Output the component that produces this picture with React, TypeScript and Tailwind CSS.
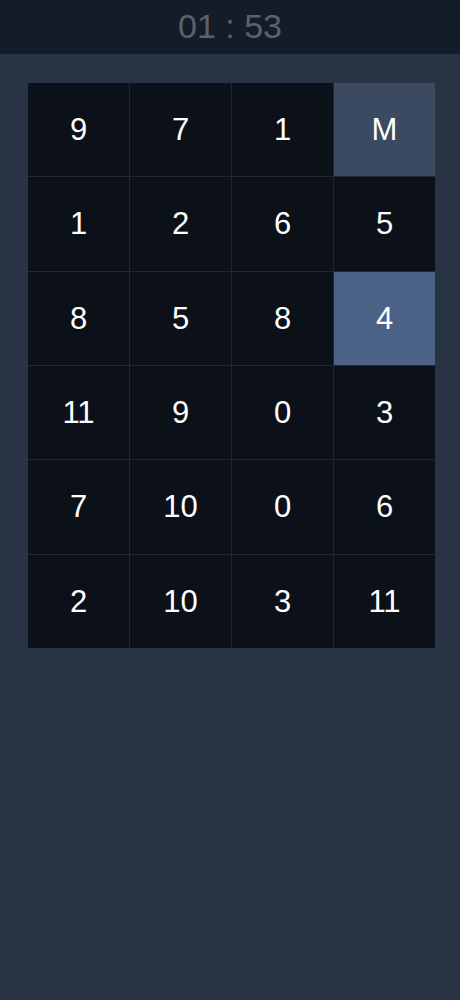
import React from "react";

const cells: { v: string; bg?: string }[] = [
  { v: "9" }, { v: "7" }, { v: "1" }, { v: "M", bg: "bg-[#3b4a60]" },
  { v: "1" }, { v: "2" }, { v: "6" }, { v: "5" },
  { v: "8" }, { v: "5" }, { v: "8" }, { v: "4", bg: "bg-[#4b6286]" },
  { v: "11" }, { v: "9" }, { v: "0" }, { v: "3" },
  { v: "7" }, { v: "10" }, { v: "0" }, { v: "6" },
  { v: "2" }, { v: "10" }, { v: "3" }, { v: "11" },
];

export default function App() {
  return (
    <div
      className="w-[460px] h-[1000px] bg-[#283343] flex flex-col"
      style={{ fontFamily: '"Liberation Sans", Arial, sans-serif' }}
    >
      <div className="h-[54px] bg-[#141b29] flex items-center justify-center pb-[3px]">
        <span className="text-[34px] leading-none text-[#5c6168]">01 : 53</span>
      </div>
      <div className="pt-[29px] pl-[28px]">
        <div className="w-[407px] h-[565px] grid grid-cols-4 grid-rows-6 gap-px bg-[#1f2734]">
          {cells.map((c, i) => (
            <div
              key={i}
              className={`${c.bg ?? "bg-[#0c1019]"} flex items-center justify-center text-white text-[31px] pt-[1px]`}
            >
              {c.v}
            </div>
          ))}
        </div>
      </div>
    </div>
  );
}
